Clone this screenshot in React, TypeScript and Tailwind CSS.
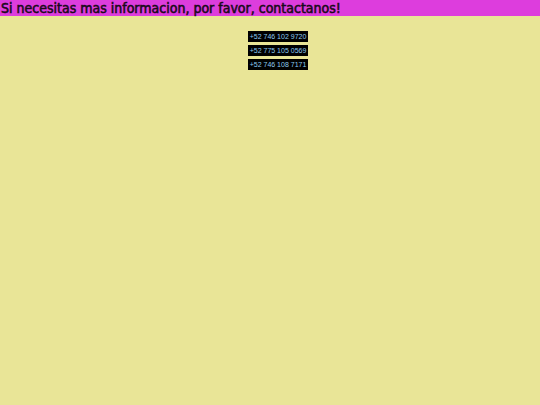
export default function App() {
  const phones = ["+52 746 102 9720", "+52 775 105 0569", "+52 746 108 7171"];
  return (
    <div className="min-h-[405px] bg-[#e9e597]">
      <h1
        className="bg-[#dd3ddd] text-[#1a0a1a] text-[14px] leading-[16px] h-[16px] font-normal [-webkit-text-stroke:0.55px_#1a0a1a] pl-[1px] whitespace-nowrap"
        style={{ fontFamily: '"DejaVu Sans Condensed", "DejaVu Sans", sans-serif' }}
      >
        Si necesitas mas informacion, por favor, contactanos!
      </h1>
      <div className="flex flex-col items-center gap-[3px] pt-[15px] pl-[16px]">
        {phones.map((p) => (
          <span
            key={p}
            className="bg-black text-[#8ccaf0] text-[7px] leading-[11px] h-[11px] px-[2px]"
            style={{ fontFamily: '"Liberation Sans", Arial, sans-serif' }}
          >
            {p}
          </span>
        ))}
      </div>
    </div>
  );
}
